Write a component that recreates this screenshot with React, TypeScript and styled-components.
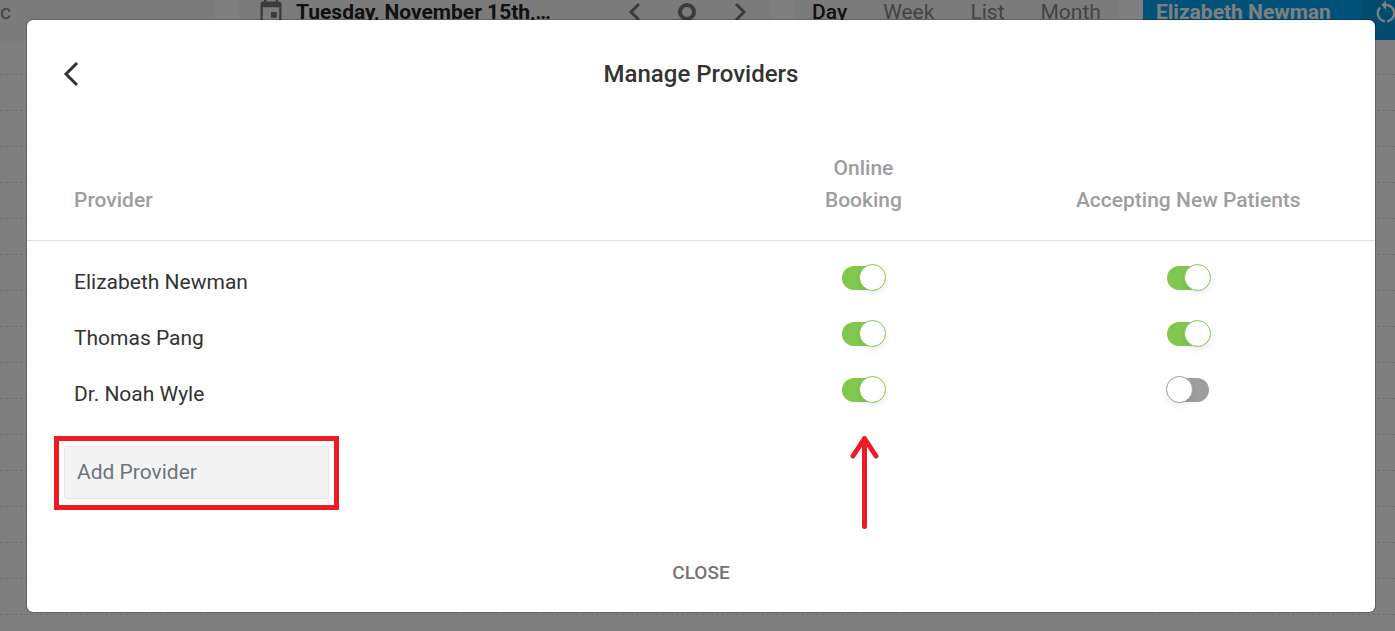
import React, { useState } from "react";
import styled, { createGlobalStyle } from "styled-components";
import { MdEvent, MdRestartAlt } from "react-icons/md";

const GlobalStyle = createGlobalStyle`
  *, *::before, *::after { box-sizing: border-box; }
  body {
    margin: 0;
    background: #fff;
    color: #333;
    font-family: Roboto, "Liberation Sans", sans-serif;
    font-size: 21px;
    line-height: 24px;
  }
  button, input { font: inherit; color: inherit; }
`;

const Page = styled.div`
  position: relative;
  min-height: 100vh;
  overflow: hidden;
`;

const Calendar = styled.div`
  position: absolute;
  inset: 0;
  overflow: hidden;
`;

const Toolbar = styled.div`
  display: flex;
  gap: 24px;
  height: 40px;
`;

const ToolGroup = styled.div<{ $width?: number }>`
  display: flex;
  align-items: center;
  flex: ${(p) => (p.$width ? `0 0 ${p.$width}px` : "1 1 0")};
  min-width: 0;
  height: 41px;
  padding-bottom: 17px;
  background: #f6f6f6;
  color: #888;
  white-space: nowrap;
`;

const DateGroup = styled(ToolGroup)`
  padding-left: 18px;
  padding-right: 4px;
`;

const DateLabel = styled.span`
  flex: 1;
  margin-left: 11px;
  color: #222;
  font-weight: 700;
`;

const IconButton = styled.button`
  display: flex;
  flex: none;
  align-items: center;
  justify-content: center;
  width: 53px;
  height: 24px;
  padding: 0;
  border: 0;
  background: none;
  color: #777;
`;

const BackButton = styled(IconButton)`
  color: #333;
`;

const ViewButton = styled.button<{ $active?: boolean }>`
  padding: 0 18px;
  border: 0;
  background: none;
  color: ${(p) => (p.$active ? "#222" : "#888")};
  font-weight: ${(p) => (p.$active ? 500 : 400)};
`;

const ProviderGroup = styled.div`
  display: flex;
  flex: 0 0 252px;
  min-width: 0;
  height: 40px;
  background: #0096dc;
  color: #fff;
  font-weight: 700;
`;

const ProviderName = styled.span`
  flex: 0 0 218px;
  padding: 0 13px;
  background: #00a4f4;
  white-space: nowrap;
`;

const RefreshButton = styled(IconButton)`
  width: 50px;
  color: #fff;
`;

const Slot = styled.div`
  height: 36px;
  border-bottom: 1px dashed #dedede;

  &:first-child { height: 35px; }
`;

const Overlay = styled.div`
  position: relative;
  min-height: 100vh;
  padding: 19px 19px 18px 26px;
  background: rgba(0, 0, 0, 0.5);
`;

const Dialog = styled.section`
  border: 1px solid rgba(0, 0, 0, 0.2);
  border-radius: 7px;
  background: #fff;
  background-clip: padding-box;
`;

const DialogHeader = styled.header`
  display: grid;
  grid-template-columns: 60px 1fr 60px;
  align-items: center;
  height: 108px;
  padding: 0 18px;
`;

const Title = styled.h1`
  margin: 0;
  font-size: 24px;
  line-height: 32px;
  font-weight: 500;
  text-align: center;
`;

const Table = styled.table`
  width: 100%;
  border-collapse: collapse;
  table-layout: fixed;
`;

const HeadCell = styled.th<{ $width: string; $left?: boolean }>`
  width: ${(p) => p.$width};
  height: 112px;
  padding: 0 0 24px ${(p) => (p.$left ? 47 : 0)}px;
  border-bottom: 1px solid #e0e0e0;
  color: #9e9e9e;
  font-weight: 500;
  line-height: 32px;
  text-align: ${(p) => (p.$left ? "left" : "center")};
  vertical-align: bottom;
`;

const Stacked = styled.span`
  display: inline-block;
  width: 80px;
`;

const Body = styled.tbody`
  &::before {
    content: "";
    display: block;
    height: 13px;
  }
`;

const Row = styled.tr`
  height: 56px;
`;

const NameCell = styled.th`
  padding: 0 47px;
  font-weight: 400;
  text-align: left;
`;

const SwitchCell = styled.td`
  padding: 0 0 8px;
`;

const Switch = styled.input`
  position: relative;
  display: block;
  width: 42px;
  height: 24px;
  margin: 0 auto;
  border-radius: 12px;
  background: #9e9e9e;
  appearance: none;
  cursor: pointer;

  &::before {
    content: "";
    position: absolute;
    top: -2px;
    left: -1px;
    width: 27px;
    height: 27px;
    border: 1px solid #9e9e9e;
    border-radius: 50%;
    background: #fff;
    box-shadow: 0 3px 6px rgba(0, 0, 0, 0.08);
  }
  &:checked { background: #82c74f; }
  &:checked::before { left: 17px; border-color: #82c74f; }
`;

const AddRow = styled.div`
  display: grid;
  grid-template-columns: 51.8% 20.5% 27.7%;
  align-items: start;
  margin-top: 14px;
`;

const Highlight = styled.div`
  width: 285px;
  margin-left: 27px;
  padding: 5px 5px 6px;
  border: 5px solid #ed1c24;
`;

const AddInput = styled.input`
  display: block;
  width: 100%;
  height: 53px;
  padding: 0 12px;
  border: 1px solid #e5e5e5;
  border-radius: 3px;
  background: #f4f4f4;

  &::placeholder { color: #6c757d; opacity: 1; }
`;

const Arrow = styled.svg`
  display: block;
  margin: 0 auto;
`;

const DialogFooter = styled.footer`
  display: flex;
  justify-content: center;
  padding: 29px 0 27px;
`;

const CloseButton = styled.button`
  padding: 0 12px;
  border: 0;
  background: none;
  color: #757575;
  font-size: 19px;
  font-weight: 500;
`;

const columns = ["51.8%", "20.5%", "27.7%"];

const initial = [
  { name: "Elizabeth Newman", booking: true, accepting: true },
  { name: "Thomas Pang", booking: true, accepting: true },
  { name: "Dr. Noah Wyle", booking: true, accepting: false },
];

function Chevron({ right }: { right?: boolean }) {
  return (
    <svg width="22" height="22" fill="none" stroke="currentColor" strokeWidth="3" aria-hidden>
      <path d={right ? "M7 3l8 8-8 8" : "M16 3l-8 8 8 8"} />
    </svg>
  );
}

export default function App() {
  const [providers, setProviders] = useState(initial);
  const toggle = (index: number, key: "booking" | "accepting") =>
    setProviders(providers.map((p, i) => (i === index ? { ...p, [key]: !p[key] } : p)));

  return (
    <Page>
      <GlobalStyle />
      <Calendar>
        <Toolbar>
          <ToolGroup $width={215}>c</ToolGroup>
          <DateGroup>
            <MdEvent size={28} color="#777" />
            <DateLabel>Tuesday, November 15th,…</DateLabel>
            <IconButton aria-label="Previous day"><Chevron /></IconButton>
            <IconButton aria-label="Today">
              <svg width="22" height="22" fill="none" stroke="currentColor" strokeWidth="4" aria-hidden>
                <circle cx="11" cy="11" r="7" />
              </svg>
            </IconButton>
            <IconButton aria-label="Next day"><Chevron right /></IconButton>
          </DateGroup>
          <ToolGroup $width={325}>
            <ViewButton $active>Day</ViewButton>
            <ViewButton>Week</ViewButton>
            <ViewButton>List</ViewButton>
            <ViewButton>Month</ViewButton>
          </ToolGroup>
          <ProviderGroup>
            <ProviderName>Elizabeth Newman</ProviderName>
            <RefreshButton aria-label="Refresh"><MdRestartAlt size={28} /></RefreshButton>
          </ProviderGroup>
        </Toolbar>
        <div>
          {Array.from({ length: 17 }, (_, i) => <Slot key={i} />)}
        </div>
      </Calendar>

      <Overlay>
        <Dialog role="dialog" aria-labelledby="dialog-title">
          <DialogHeader>
            <BackButton aria-label="Back">
              <svg width="26" height="26" fill="none" stroke="currentColor" strokeWidth="3" aria-hidden>
                <path d="M18 2L7 13l11 11" />
              </svg>
            </BackButton>
            <Title id="dialog-title">Manage Providers</Title>
          </DialogHeader>
          <Table>
            <thead>
              <tr>
                <HeadCell $width={columns[0]} $left>Provider</HeadCell>
                <HeadCell $width={columns[1]}><Stacked>Online Booking</Stacked></HeadCell>
                <HeadCell $width={columns[2]}>Accepting New Patients</HeadCell>
              </tr>
            </thead>
            <Body>
              {providers.map((p, i) => (
                <Row key={p.name}>
                  <NameCell scope="row">{p.name}</NameCell>
                  <SwitchCell>
                    <Switch type="checkbox" role="switch" aria-label={`Online booking for ${p.name}`} checked={p.booking} onChange={() => toggle(i, "booking")} />
                  </SwitchCell>
                  <SwitchCell>
                    <Switch type="checkbox" role="switch" aria-label={`${p.name} accepting new patients`} checked={p.accepting} onChange={() => toggle(i, "accepting")} />
                  </SwitchCell>
                </Row>
              ))}
            </Body>
          </Table>
          <AddRow>
            <Highlight>
              <AddInput type="text" aria-label="Add Provider" placeholder="Add Provider" />
            </Highlight>
            <Arrow width="32" height="96" fill="none" stroke="#ed1c24" strokeWidth="5" strokeLinecap="round" strokeLinejoin="round" aria-hidden>
              <path d="M17.500 2.500v88M6 20L17.500 2.500 29 20" />
            </Arrow>
          </AddRow>
          <DialogFooter>
            <CloseButton>CLOSE</CloseButton>
          </DialogFooter>
        </Dialog>
      </Overlay>
    </Page>
  );
}
